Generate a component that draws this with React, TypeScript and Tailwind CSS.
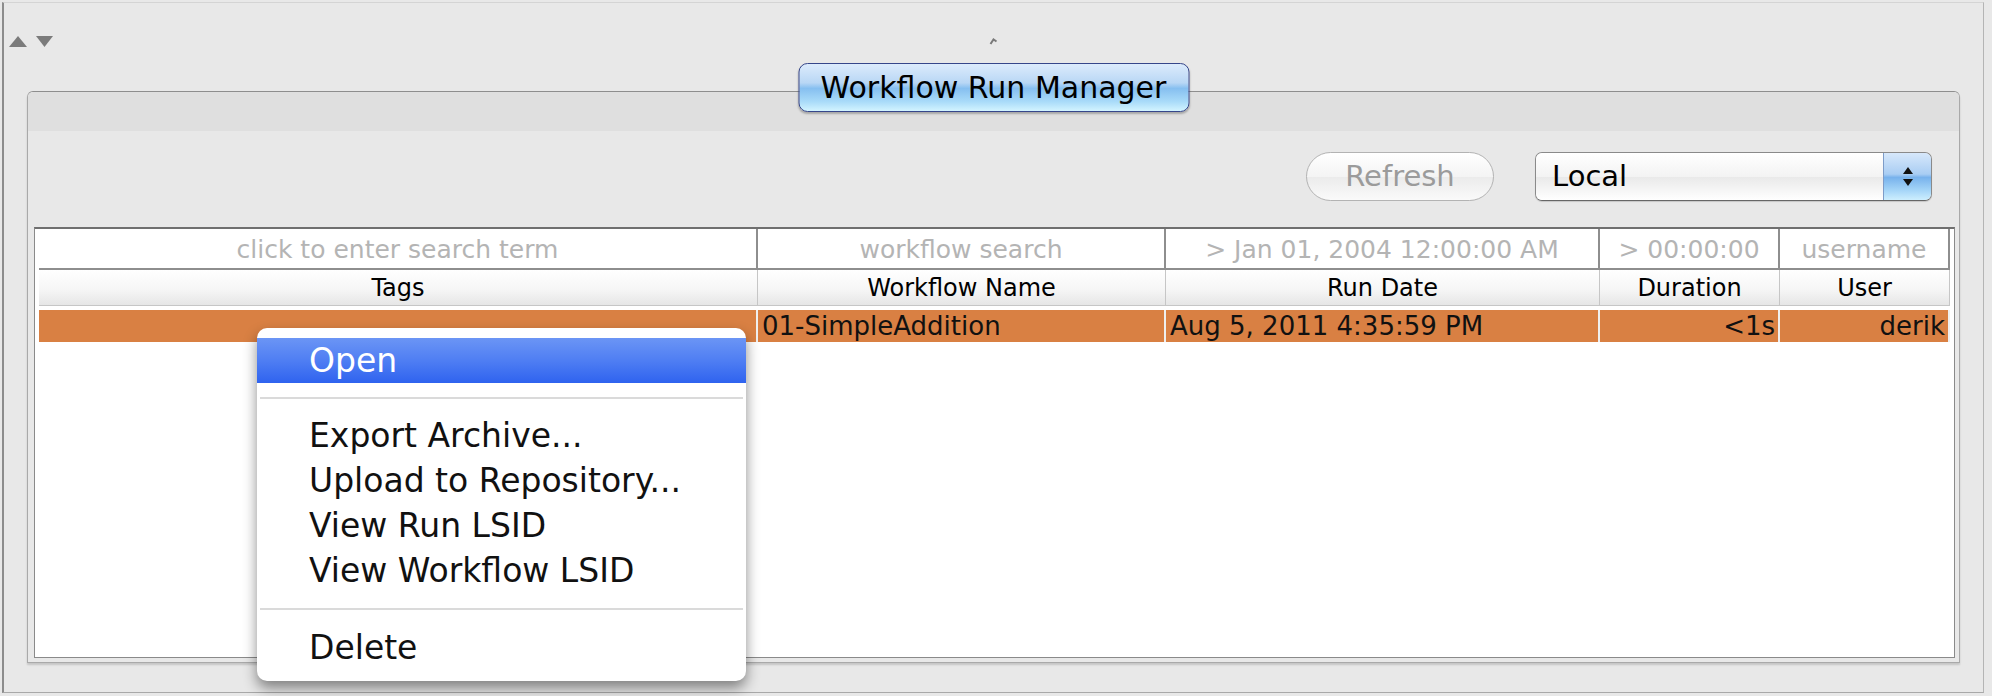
import React from "react";

const cols = [
  { filter: "click to enter search term", head: "Tags", value: "", align: "left" },
  { filter: "workflow search", head: "Workflow Name", value: "01-SimpleAddition", align: "left" },
  { filter: "> Jan 01, 2004 12:00:00 AM", head: "Run Date", value: "Aug 5, 2011 4:35:59 PM", align: "left" },
  { filter: "> 00:00:00", head: "Duration", value: "<1s", align: "right" },
  { filter: "username", head: "User", value: "derik", align: "right" },
];

const menuItems = ["Export Archive...", "Upload to Repository...", "View Run LSID", "View Workflow LSID"];

function Separator({ h }: { h: string }) {
  return (
    <div className={`${h} flex items-center px-[3px]`}>
      <div className="h-[2px] w-full bg-[#dadada]" />
    </div>
  );
}

export default function App() {
  return (
    <div className="relative w-[1992px] h-[696px] overflow-hidden bg-[#e8e8e8] pl-[2px] pt-[2px] font-['DejaVu_Sans',sans-serif]">
      <div className="w-[1982px] h-[691px] border-l-2 border-l-[#8c8c8c] border-t border-t-[#d4d4d4] border-r border-r-[#b4b4b4] border-b border-b-[#a8a8a8]">
        {/* splitter strip */}
        <div className="grid grid-cols-[1fr_auto_1fr] h-[88px] pt-[33px]">
          <div className="flex gap-[9px] pl-[5px]">
            <svg width="18" height="12" viewBox="0 0 18 12">
              <polygon points="0,11 9,0 18,11" fill="#7b7b7b" />
            </svg>
            <svg width="17" height="12" viewBox="0 0 17 12">
              <polygon points="0,0 17,0 8.5,11" fill="#7b7b7b" />
            </svg>
          </div>
          <svg width="9" height="9" viewBox="0 0 9 9" className="mt-[1px]">
            <path d="M1.5 7 L4.5 2.5 L7.5 4.5" stroke="#7a7a7a" strokeWidth="2" fill="none" />
          </svg>
          <div />
        </div>

        {/* group panel */}
        <div className="relative ml-[23px] w-[1933px] h-[572px] rounded-t-[6px] border border-[#a9a9a9] border-t-[#8e8e8e] shadow-[0_2px_2px_rgba(0,0,0,0.15)]">
          <div className="absolute left-1/2 -translate-x-1/2 -top-[29px] w-[391px] h-[49px] flex items-center justify-center rounded-[9px] border border-[#36468a] bg-[linear-gradient(to_bottom,#dcebfc_0%,#b9d7f5_40%,#86bff0_52%,#a9dbf9_80%,#d3f4ff_100%)] shadow-[0_2px_2px_rgba(0,0,0,0.25)] text-[30px] leading-none text-black">
            Workflow Run Manager
          </div>

          <div className="h-[39px] bg-[#dfdfdf] rounded-t-[5px]" />

          <div className="flex justify-end gap-[41px] pt-[21px] pr-[27px]">
            <div className="w-[188px] h-[49px] flex items-center justify-center rounded-full border border-[#b3b3b3] bg-[linear-gradient(to_bottom,#ffffff_0%,#f4f4f4_50%,#ebebeb_51%,#fafafa_100%)] text-[29px] leading-none text-[#9b9b9b]">
              Refresh
            </div>
            <div className="w-[397px] h-[49px] flex rounded-[7px] border border-[#8a8a8a] border-b-[#666] overflow-hidden shadow-[0_1px_1px_rgba(0,0,0,0.15)]">
              <div className="flex-1 flex items-center pl-[16px] bg-[linear-gradient(to_bottom,#ffffff_0%,#f3f3f3_50%,#e9e9e9_51%,#ffffff_100%)] text-[29px] leading-none text-black">
                Local
              </div>
              <div className="w-[48px] flex flex-col items-center justify-center gap-[5px] bg-[linear-gradient(to_bottom,#d7e8fb_0%,#a9cdf3_45%,#78b2ec_52%,#a6d6f8_80%,#cdeefe_100%)] border-l border-[#7d9cc8]">
                <svg width="10" height="7" viewBox="0 0 10 7">
                  <polygon points="0,7 5,0 10,7" fill="#111" />
                </svg>
                <svg width="10" height="7" viewBox="0 0 10 7">
                  <polygon points="0,0 10,0 5,7" fill="#111" />
                </svg>
              </div>
            </div>
          </div>

          {/* table */}
          <div className="mt-[26px] ml-[6px] mr-[4px] h-[431px] border border-[#8a8a8a] border-t-2 border-t-[#6f6f6f] bg-white px-[4px]">
            <div className="grid grid-cols-[719px_408px_434px_180px_1fr] h-[41px]">
              {cols.map((c) => (
                <div
                  key={c.head}
                  className="flex items-center justify-center bg-white border-r-2 border-b-2 border-[#8e8e8e] text-[25px] leading-none text-[#b4b4b4] pt-[2px] whitespace-nowrap overflow-hidden"
                >
                  {c.filter}
                </div>
              ))}
            </div>
            <div className="grid grid-cols-[719px_408px_434px_180px_1fr] h-[36px]">
              {cols.map((c) => (
                <div
                  key={c.head}
                  className="flex items-center justify-center bg-[linear-gradient(to_bottom,#ffffff_0%,#f6f6f6_55%,#e6e6e6_100%)] border-r border-b border-[#c6c6c6] text-[24px] leading-none text-black"
                >
                  {c.head}
                </div>
              ))}
            </div>
            <div className="grid grid-cols-[719px_408px_434px_180px_1fr] h-[32px] mt-[4px]">
              {cols.map((c) => (
                <div
                  key={c.head}
                  className={`flex items-center bg-[#d98043] border-r-2 border-[#efefef] text-[26px] leading-none text-[#111] whitespace-nowrap overflow-hidden ${
                    c.align === "right" ? "justify-end pr-[3px]" : "justify-start pl-[4px]"
                  }`}
                >
                  {c.value}
                </div>
              ))}
            </div>
          </div>
        </div>
      </div>

      {/* context menu */}
      <div className="absolute left-[257px] top-[328px] w-[489px] rounded-[10px] bg-white pt-[10px] pb-[11px] shadow-[0_7px_14px_rgba(0,0,0,0.45)] text-[33px] leading-none text-[#111]">
        <div className="h-[45px] flex items-center pl-[52px] text-white bg-[linear-gradient(to_bottom,#6b95f5_0%,#4f7ef3_50%,#2f63ef_100%)]">
          Open
        </div>
        <Separator h="h-[30px]" />
        {menuItems.map((m) => (
          <div key={m} className="h-[45px] flex items-center pl-[52px]">
            {m}
          </div>
        ))}
        <Separator h="h-[32px]" />
        <div className="h-[45px] flex items-center pl-[52px]">Delete</div>
      </div>
    </div>
  );
}
